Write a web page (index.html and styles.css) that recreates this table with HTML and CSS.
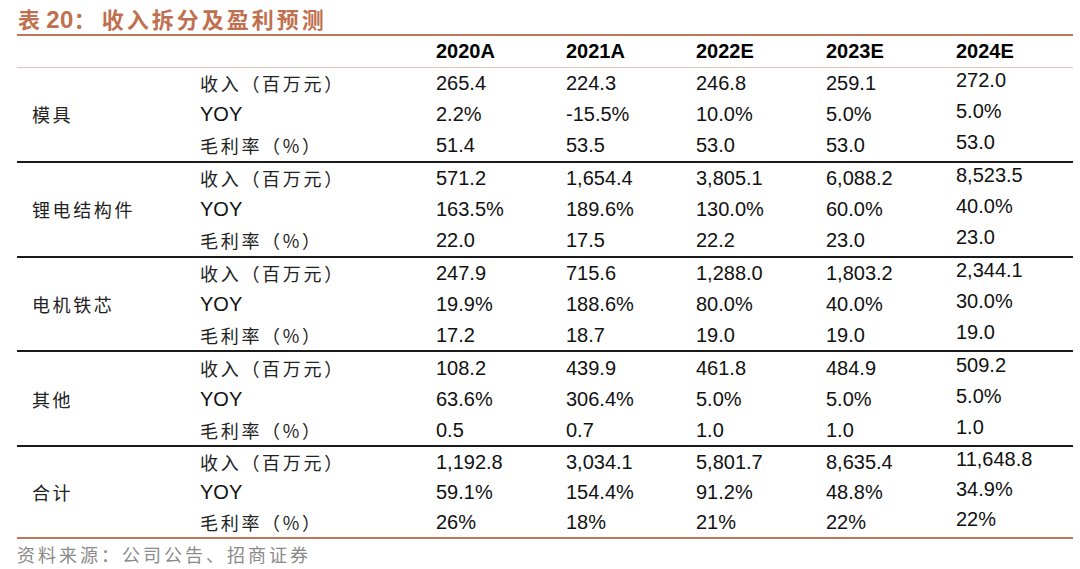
FILE: index.html
```html
<!DOCTYPE html>
<html lang="zh">
<head>
<meta charset="utf-8">
<title>表 20：收入拆分及盈利预测</title>
<link rel="stylesheet" href="styles.css">
</head>
<body>
<div class="page">
  <h1 class="title"><span class="t-pre">表</span> <span class="t-num">20</span>：<span class="t-main">收入拆分及盈利预测</span></h1>
  <table class="fin">
    <colgroup>
      <col class="c-cat"><col class="c-lab"><col class="c-d"><col class="c-d"><col class="c-d"><col class="c-d"><col class="c-last">
    </colgroup>
    <thead>
      <tr><th></th><th></th><th>2020A</th><th>2021A</th><th>2022E</th><th>2023E</th><th>2024E</th></tr>
    </thead>
    <tbody class="sec">
      <tr><td class="cat" rowspan="3">模具</td><td class="lab">收入（百万元）</td><td>265.4</td><td>224.3</td><td>246.8</td><td>259.1</td><td class="up">272.0</td></tr>
      <tr><td class="lab en">YOY</td><td>2.2%</td><td>-15.5%</td><td>10.0%</td><td>5.0%</td><td class="up">5.0%</td></tr>
      <tr><td class="lab">毛利率（%）</td><td>51.4</td><td>53.5</td><td>53.0</td><td>53.0</td><td class="up">53.0</td></tr>
    </tbody>
    <tbody class="sec">
      <tr><td class="cat" rowspan="3">锂电结构件</td><td class="lab">收入（百万元）</td><td>571.2</td><td>1,654.4</td><td>3,805.1</td><td>6,088.2</td><td class="up">8,523.5</td></tr>
      <tr><td class="lab en">YOY</td><td>163.5%</td><td>189.6%</td><td>130.0%</td><td>60.0%</td><td class="up">40.0%</td></tr>
      <tr><td class="lab">毛利率（%）</td><td>22.0</td><td>17.5</td><td>22.2</td><td>23.0</td><td class="up">23.0</td></tr>
    </tbody>
    <tbody class="sec">
      <tr><td class="cat" rowspan="3">电机铁芯</td><td class="lab">收入（百万元）</td><td>247.9</td><td>715.6</td><td>1,288.0</td><td>1,803.2</td><td class="up">2,344.1</td></tr>
      <tr><td class="lab en">YOY</td><td>19.9%</td><td>188.6%</td><td>80.0%</td><td>40.0%</td><td class="up">30.0%</td></tr>
      <tr><td class="lab">毛利率（%）</td><td>17.2</td><td>18.7</td><td>19.0</td><td>19.0</td><td class="up">19.0</td></tr>
    </tbody>
    <tbody class="sec">
      <tr><td class="cat" rowspan="3">其他</td><td class="lab">收入（百万元）</td><td>108.2</td><td>439.9</td><td>461.8</td><td>484.9</td><td class="up">509.2</td></tr>
      <tr><td class="lab en">YOY</td><td>63.6%</td><td>306.4%</td><td>5.0%</td><td>5.0%</td><td class="up">5.0%</td></tr>
      <tr><td class="lab">毛利率（%）</td><td>0.5</td><td>0.7</td><td>1.0</td><td>1.0</td><td class="up">1.0</td></tr>
    </tbody>
    <tbody class="sec last">
      <tr><td class="cat" rowspan="3">合计</td><td class="lab">收入（百万元）</td><td>1,192.8</td><td>3,034.1</td><td>5,801.7</td><td>8,635.4</td><td class="up">11,648.8</td></tr>
      <tr><td class="lab en">YOY</td><td>59.1%</td><td>154.4%</td><td>91.2%</td><td>48.8%</td><td class="up">34.9%</td></tr>
      <tr><td class="lab">毛利率（%）</td><td>26%</td><td>18%</td><td>21%</td><td>22%</td><td class="up">22%</td></tr>
    </tbody>
  </table>
  <p class="source">资料来源：公司公告、招商证券</p>
</div>
</body>
</html>
```

FILE: styles.css
```css
html, body {
  margin: 0;
  padding: 0;
  background: #ffffff;
}

.page {
  width: 1056px;
  padding-left: 17px;
  font-family: "Liberation Sans", Arial, "Noto Sans CJK SC", sans-serif;
  color: #111111;
}

.title {
  margin: 0;
  height: 34px;
  padding-top: 5px;
  box-sizing: border-box;
  font-family: "Liberation Sans", "Noto Sans CJK SC", sans-serif;
  font-size: 22px;
  line-height: 26px;
  font-weight: 700;
  color: #c0704f;
  white-space: nowrap;
}

.t-pre {
  font-family: "Noto Sans CJK SC", sans-serif;
  margin-left: 1px;
}

.t-num {
  font-size: 24px;
  letter-spacing: 0.5px;
}

.t-main {
  font-family: "Noto Sans CJK SC", sans-serif;
  letter-spacing: 3px;
  margin-left: 6px;
}

.fin {
  width: 1056px;
  border-collapse: collapse;
  table-layout: fixed;
  border-top: 2px solid #c27456;
}

.c-cat { width: 183px; }
.c-lab { width: 236px; }
.c-d { width: 130px; }
.c-last { width: 117px; }

.fin thead tr {
  height: 32px;
}

.fin th {
  padding: 0;
  text-align: left;
  font-size: 20px;
  line-height: 22px;
  font-weight: 700;
  color: #000000;
  border-bottom: 1px solid #e2c3b6;
  vertical-align: middle;
}

.fin tbody tr {
  height: 31.6px;
}

.fin tbody.last tr {
  height: 30.6px;
}

.fin td {
  padding: 0;
  font-size: 20px;
  line-height: 22px;
  vertical-align: middle;
  white-space: nowrap;
}

.sec {
  border-bottom: 2px solid #1a1a1a;
}

.sec.last {
  border-bottom: 2px solid #c27456;
}

.fin td.cat {
  padding-left: 15px;
  font-family: "Noto Sans CJK SC", sans-serif;
  font-size: 18px;
  line-height: 22px;
  letter-spacing: 2.6px;
  color: #222222;
}

.fin td.lab {
  font-family: "Noto Sans CJK SC", sans-serif;
  font-size: 18px;
  line-height: 22px;
  letter-spacing: 2.7px;
  color: #222222;
}

.fin td.lab.en {
  font-family: "Liberation Sans", Arial, sans-serif;
  font-size: 20px;
  letter-spacing: 0;
  color: #111111;
}

.fin td.up {
  padding-bottom: 6px;
}

.source {
  margin: 0;
  padding-top: 3px;
  font-family: "Noto Sans CJK SC", sans-serif;
  font-size: 18px;
  line-height: 24px;
  letter-spacing: 3px;
  color: #8a8a8a;
}
```
